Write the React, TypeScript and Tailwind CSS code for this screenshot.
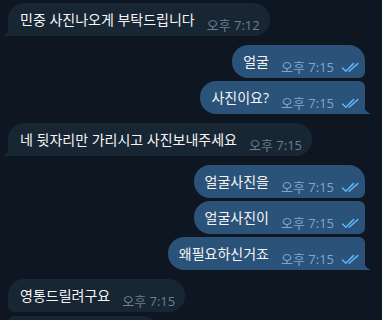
import React from "react";

type Msg = {
  text: string;
  time: string;
  out: boolean;
  pos: "single" | "first" | "middle" | "last";
  gapTop: string;
};

const messages: Msg[] = [
  { text: "민중 사진나오게 부탁드립니다", time: "오후 7:12", out: false, pos: "single", gapTop: "mt-[3px]" },
  { text: "얼굴", time: "오후 7:15", out: true, pos: "first", gapTop: "mt-[9px]" },
  { text: "사진이요?", time: "오후 7:15", out: true, pos: "last", gapTop: "mt-[3px]" },
  { text: "네 뒷자리만 가리시고 사진보내주세요", time: "오후 7:15", out: false, pos: "single", gapTop: "mt-[9px]" },
  { text: "얼굴사진을", time: "오후 7:15", out: true, pos: "first", gapTop: "mt-[9px]" },
  { text: "얼굴사진이", time: "오후 7:15", out: true, pos: "middle", gapTop: "mt-[3px]" },
  { text: "왜필요하신거죠", time: "오후 7:15", out: true, pos: "last", gapTop: "mt-[3px]" },
  { text: "영통드릴려구요", time: "오후 7:15", out: false, pos: "first", gapTop: "mt-[9px]" },
];

function DoubleCheck() {
  return (
    <svg width="19" height="11" viewBox="0 0 19 11" fill="none" className="shrink-0">
      <path d="M1.5 6 L4.8 9.3 L12.5 1.6" stroke="#5eb5f7" strokeWidth="1.5" strokeLinecap="round" strokeLinejoin="round" />
      <path d="M8.2 9.3 L16.8 1.6" stroke="#5eb5f7" strokeWidth="1.5" strokeLinecap="round" />
    </svg>
  );
}

function radius(m: Msg) {
  if (m.out) {
    if (m.pos === "first") return "rounded-[16px] rounded-br-[6px]";
    if (m.pos === "middle") return "rounded-l-[16px] rounded-r-[6px]";
    if (m.pos === "last") return "rounded-l-[16px] rounded-tr-[6px] rounded-br-none";
    return "rounded-[16px] rounded-br-none";
  }
  if (m.pos === "first") return "rounded-[16px] rounded-bl-[6px]";
  if (m.pos === "middle") return "rounded-r-[16px] rounded-l-[6px]";
  return "rounded-r-[16px] rounded-tl-[16px] rounded-bl-none";
}

function hasTail(m: Msg) {
  return m.pos === "single" || m.pos === "last";
}

function Bubble({ m }: { m: Msg }) {
  return (
    <div className={`flex ${m.out ? "justify-end pr-[17px]" : "justify-start pl-2"} ${m.gapTop}`}>
      <div
        className={`relative flex h-[33px] items-end ${radius(m)} ${
          m.out ? "bg-[#2b5278] pl-[11px] pr-[5px]" : "bg-[#182533] pl-3 pr-[10px]"
        }`}
      >
        <span className="self-center text-[14px] leading-5 text-[#f5f5f5] whitespace-nowrap">{m.text}</span>
        <span
          className={`ml-3 mb-[3px] text-[13px] leading-4 whitespace-nowrap ${
            m.out ? "text-[#7da8d3]" : "text-[#6d7f8f]"
          }`}
        >
          {m.time}
        </span>
        {m.out && (
          <span className="ml-[7px] mb-[5px]">
            <DoubleCheck />
          </span>
        )}
        {hasTail(m) &&
          (m.out ? (
            <svg width="7" height="10" viewBox="0 0 7 10" className="absolute bottom-0 -right-[6px]">
              <path d="M0 0 C0 5 2 8 7 10 L0 10 Z" fill="#2b5278" />
            </svg>
          ) : (
            <svg width="7" height="10" viewBox="0 0 7 10" className="absolute bottom-0 -left-[6px]">
              <path d="M7 0 C7 5 5 8 0 10 L7 10 Z" fill="#182533" />
            </svg>
          ))}
      </div>
    </div>
  );
}

export default function App() {
  return (
    <div
      className="h-[320px] w-[382px] overflow-hidden bg-[#0e1621]"
      style={{ fontFamily: '"Open Sans", "Noto Sans CJK KR", sans-serif' }}
    >
      <div className="flex flex-col">
        {messages.map((m, i) => (
          <Bubble key={i} m={m} />
        ))}
        <div className="mt-[4px] flex pl-2">
          <div className="h-[33px] w-[150px] rounded-[16px] rounded-tl-[6px] bg-[#182533]" />
        </div>
      </div>
    </div>
  );
}
